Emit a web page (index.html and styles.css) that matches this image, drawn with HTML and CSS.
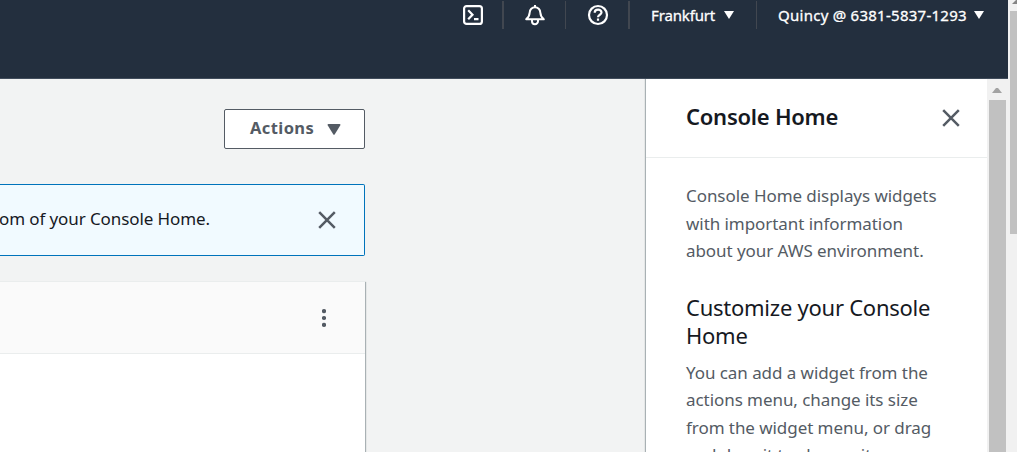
FILE: index.html
```html
<!DOCTYPE html>
<html lang="en">
<head>
<meta charset="utf-8">
<title>Console Home</title>
<link rel="stylesheet" href="styles.css">
</head>
<body>
<div class="viewport">
  <div class="page">
    <header class="topnav">
      <span class="nav-icon first">
        <svg width="22" height="22" viewBox="0 0 22 22" fill="none" stroke="#fff" stroke-width="2.200"><rect x="2.100" y="2.100" width="17.800" height="17.800" rx="2.500"/><path d="M6.200 6.300l4.300 4.400-4.300 4.500M12 15.200h4.500"/></svg>
      </span>
      <span class="nav-icon sep-left wide">
        <svg width="22" height="22" viewBox="0 0 22 22" fill="none" stroke="#fff" stroke-width="2" stroke-linejoin="round"><path d="M11 1v2M2.200 15.300C4.700 13.200 5.500 11.500 5.700 8.500a5.300 5.300 0 0 1 10.600 0C16.500 11.500 17.300 13.200 19.800 15.300zM8 16v1.200a3 3 0 0 0 6 0V16"/></svg>
      </span>
      <span class="nav-icon sep-left">
        <svg width="22" height="22" viewBox="0 0 22 22" fill="none" stroke="#fff" stroke-width="2.200"><circle cx="11" cy="11" r="9"/><path d="M7.700 8.800c0-4.200 6.800-4 6.800-.2 0 2.200-3.500 2.100-3.500 4.700M11 14.600v2.200"/></svg>
      </span>
      <span class="nav-menu region sep-left wide"><span class="region-text">Frankfurt</span><svg width="10" height="8"><path d="M0 0h10L5 8z" fill="#fff"/></svg></span>
      <span class="nav-menu account sep-left"><span class="account-text">Quincy @ 6381-5837-1293</span><svg width="10" height="8"><path d="M0 0h10L5 8z" fill="#fff"/></svg></span>
    </header>
    <div class="body">
      <main class="content">
        <button class="actions"><span class="actions-text">Actions</span><svg width="14" height="11"><path d="M0.500 1q0-1 1-1h11q1 0 1 1L7.800 10.300q-.8 1-1.600 0z" fill="#545b64"/></svg></button>
        <section class="notice">
          <span class="notice-text">om of your Console Home.</span>
          <svg width="18" height="18" stroke="#545b64" stroke-width="2.500"><path d="M1.200 1.200l15.600 15.600M16.800 1.200L1.200 16.800"/></svg>
        </section>
        <section class="widget">
          <div class="widget-head">
            <svg width="4" height="18" fill="#545b64"><circle cx="2" cy="2.100" r="2.100"/><circle cx="2" cy="9" r="2.100"/><circle cx="2" cy="15.900" r="2.100"/></svg>
          </div>
        </section>
      </main>
      <aside class="panel">
        <div class="panel-head">
          <h2 class="panel-title">Console Home</h2>
          <svg width="18" height="18" stroke="#545b64" stroke-width="2.500"><path d="M1.200 1.200l15.600 15.600M16.800 1.200L1.200 16.800"/></svg>
        </div>
        <div class="panel-body">
          <p class="copy intro">Console Home displays widgets<br>with important information<br>about your AWS environment.</p>
          <h3 class="subtitle">Customize your Console<br>Home</h3>
          <p class="copy">You can add a widget from the<br>actions menu, change its size<br>from the widget menu, or drag<br>and drop it to change its</p>
        </div>
      </aside>
      <div class="scroll inner">
        <svg width="10" height="5"><path d="M0 5L4 0h2l4 5z" fill="#a3a3a3"/></svg>
        <div class="thumb"></div>
      </div>
    </div>
  </div>
  <div class="scroll outer">
    <svg width="5" height="4"><path d="M0 4L4 0h1v4z" fill="#858585"/></svg>
    <div class="thumb"></div>
  </div>
</div>
</body>
</html>
```
FILE: styles.css
```css
* { box-sizing: border-box; }
body, h2, h3, p { margin: 0; }
body {
  overflow: hidden;
  font-family: "Noto Sans", "Open Sans", sans-serif;
  color: #16191f;
}
svg { display: block; flex: none; }
.viewport { display: flex; width: 1017px; height: 452px; overflow: hidden; }
.page { width: 1008px; display: flex; flex-direction: column; }

.topnav {
  flex: none;
  display: flex;
  justify-content: flex-end;
  height: 79px;
  padding: 1px 0 0;
  background: #232f3e;
  border-bottom: 1px solid #414d5c;
  color: #fff;
}
.nav-icon, .nav-menu { display: flex; height: 28px; align-items: center; }
.nav-icon { width: 63px; justify-content: center; padding-left: 1px; }
.nav-icon.first { width: 61px; padding-left: 2px; }
.sep-left { border-left: 1px solid #414750; }
.sep-left.wide { border-left-width: 2px; }
.nav-menu {
  font-size: 15px;
  white-space: nowrap;
  -webkit-text-stroke: .3px #fff;
}
.region { width: 128px; padding-left: 21px; }
.region-text { width: 73px; letter-spacing: -.15px; }
.account { width: 252px; padding-left: 21px; }
.account-text { width: 196px; letter-spacing: .26px; }

.body { flex: 1; min-height: 0; display: flex; background: #f2f3f3; }
.content {
  width: 646px;
  padding-top: 30px;
  display: flex;
  flex-direction: column;
  align-items: flex-start;
}
.content > * { flex: none; }
.actions {
  display: flex;
  align-items: center;
  width: 141px;
  height: 40px;
  margin-left: 224px;
  padding: 0 0 0 25px;
  background: #fff;
  border: 1px solid #545b64;
  border-radius: 2px;
  color: #545b64;
  font: bold 16.500px "Noto Sans", sans-serif;
  letter-spacing: .4px;
}
.actions-text { width: 77px; text-align: left; margin-top: -4px; }
.notice {
  display: flex;
  justify-content: space-between;
  align-items: center;
  width: 365px;
  height: 72px;
  margin-top: 35px;
  padding-right: 28px;
  background: #f1faff;
  border: 1px solid #0073bb;
  border-left: 0;
  border-radius: 0 2px 2px 0;
}
.notice-text { font-size: 17px; letter-spacing: -.1px; margin: -4px 0 0 -1px; white-space: nowrap; }
.widget {
  width: 365px;
  height: 200px;
  margin-top: 25px;
  background: #fff;
  box-shadow: 1px 1px 1px rgba(0, 28, 36, .3);
}
.widget-head {
  display: flex;
  justify-content: flex-end;
  align-items: center;
  height: 73px;
  padding-right: 39px;
  background: #fafafa;
  border-top: 1px solid #eaeded;
  border-bottom: 1px solid #eaeded;
}
.panel {
  width: 341px;
  background: #fff;
  box-shadow: -1px 0 1px rgba(0, 28, 36, .3);
  white-space: nowrap;
}
.panel-head {
  display: flex;
  justify-content: space-between;
  align-items: center;
  height: 79px;
  padding: 0 27px 0 40px;
  border-bottom: 1px solid #eaeded;
}
.panel-title { margin-top: -4px; font-size: 22px; line-height: 28px; font-weight: 600; letter-spacing: -.25px; }
.panel-body { padding: 24px 0 0 40px; }
.copy { font-size: 17px; line-height: 27.500px; letter-spacing: -.06px; color: #545b64; }
.subtitle { margin: 28px 0 10px; font-size: 22px; line-height: 28px; font-weight: 400; letter-spacing: -.25px; }

.scroll { background: #f1f1f1; display: flex; flex-direction: column; }
.thumb { background: #c1c1c1; }
.inner { width: 21px; align-items: center; padding: 9px 1px 0 0; }
.inner .thumb { width: 17px; flex: 1; margin-top: 7px; }
.outer { width: 9px; align-items: flex-end; }
.outer .thumb { width: 7px; height: 223px; margin-top: 7px; }
```
